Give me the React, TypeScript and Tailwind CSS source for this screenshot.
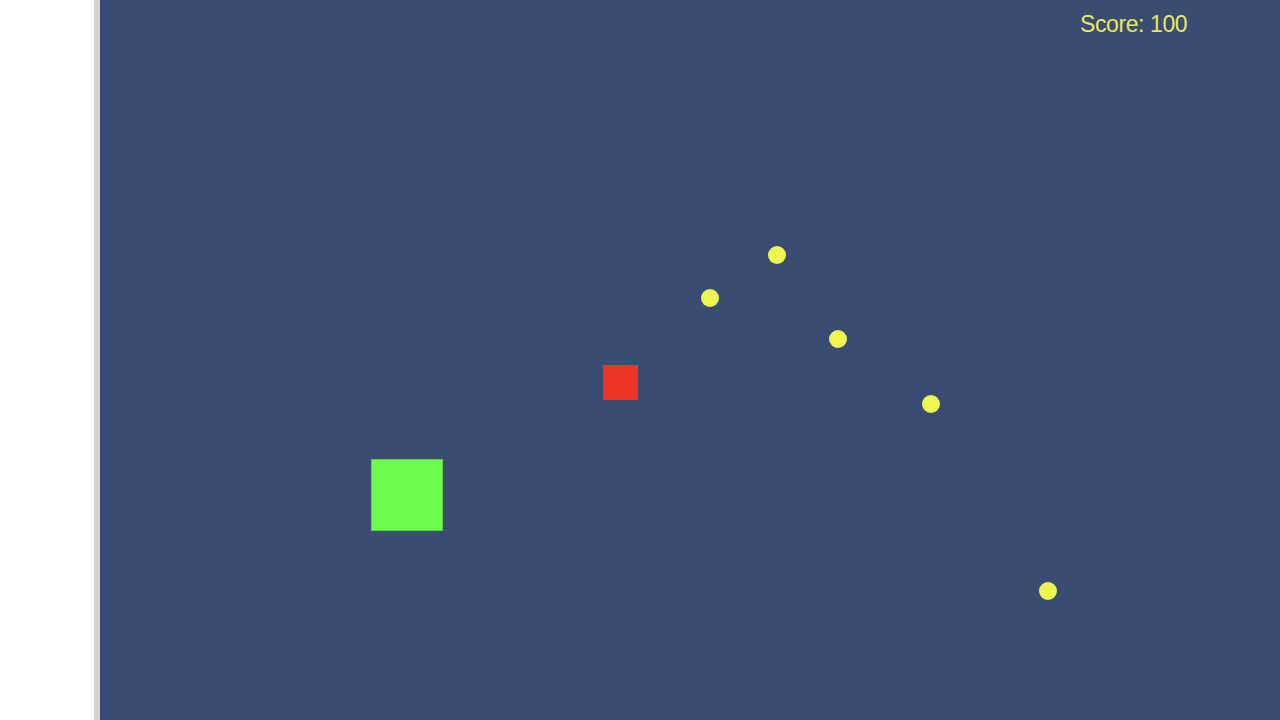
export default function App() {
  const dots = [
    [777, 255],
    [710, 298],
    [838, 339],
    [931, 404],
    [1048, 591],
  ];
  return (
    <div className="flex h-[720px] w-[1280px] overflow-hidden bg-white">
      <div className="w-[94px] shrink-0 bg-white" />
      <div className="w-[6px] shrink-0 bg-[#d2d2d2]" />
      <div className="relative flex-1 bg-[#3a4c72]">
        <div
          className="absolute left-[980px] top-[13px] text-[23px] leading-none tracking-[-0.4px] text-[#e8ea5c]"
          style={{ fontFamily: '"Liberation Sans", Arial, sans-serif' }}
        >
          Score: 100
        </div>
        <div className="absolute left-[503px] top-[365px] h-[35px] w-[35px] bg-[#ee3424]" />
        <div className="absolute left-[271px] top-[459px] h-[72px] w-[72px] bg-[#6cfa4c] border border-[#5fcf4a]" />
        {dots.map(([x, y], i) => (
          <div
            key={i}
            className="absolute h-[18px] w-[18px] rounded-full bg-[#eef552]"
            style={{ left: x - 100 - 9, top: y - 9 }}
          />
        ))}
      </div>
    </div>
  );
}
